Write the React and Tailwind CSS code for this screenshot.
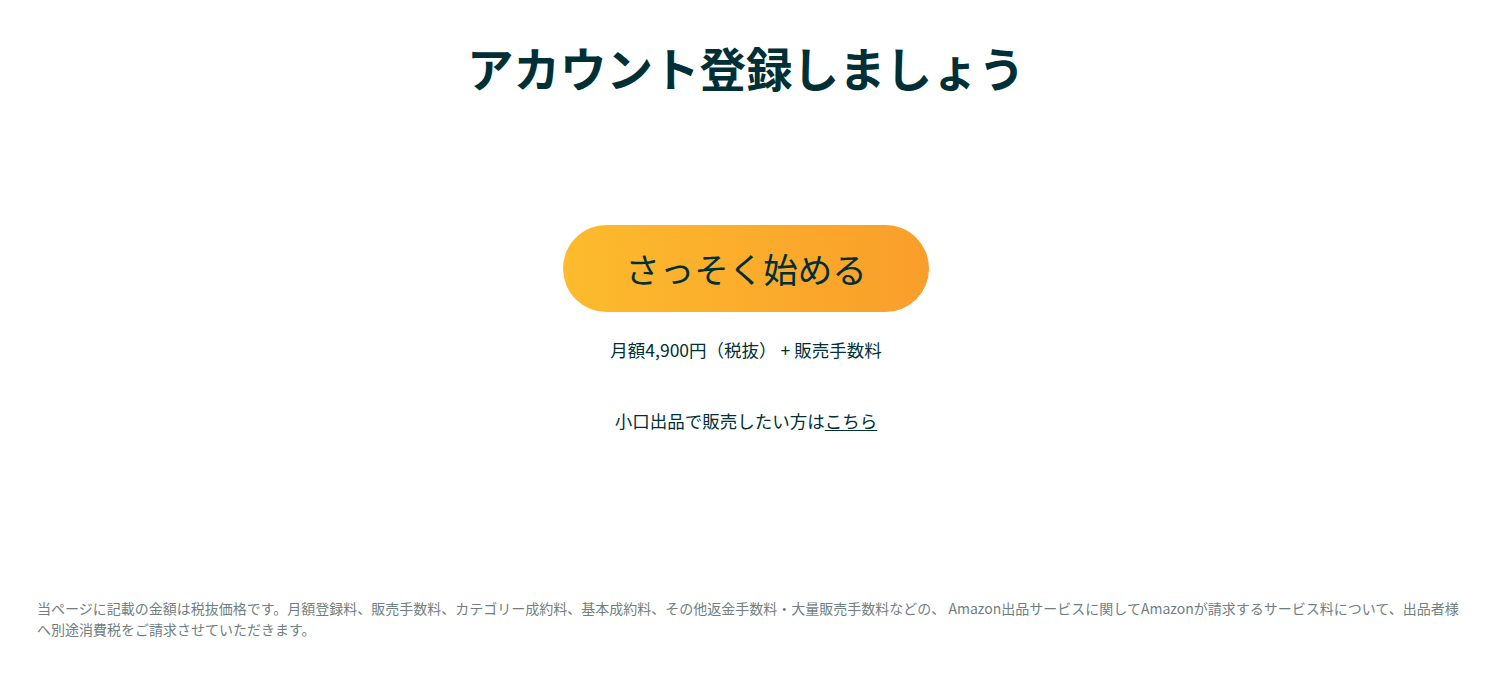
import React from "react";

const font = { fontFamily: '"Noto Sans CJK JP", "Noto Sans", sans-serif' };

export default function App() {
  return (
    <div className="w-full h-[676px] bg-white flex flex-col text-[#002f36]" style={font}>
      <div className="flex flex-col items-center pr-[8px]">
        {/* Heading */}
        <h1 className="mt-[34px] text-[46.5px] leading-[66px] font-bold">
          アカウント登録しましょう
        </h1>

        {/* CTA */}
        <button className="mt-[125px] w-[366px] h-[87px] rounded-full bg-gradient-to-r from-[#fdbb2d] to-[#f99e2a] text-[34.5px] text-[#002f36] flex items-center justify-center">
          さっそく始める
        </button>

        <p className="mt-[26px] text-[17.5px] leading-6">
          月額4,900円（税抜） + 販売手数料
        </p>

        <p className="mt-[47px] text-[17.5px] leading-6">
          小口出品で販売したい方は<a href="#" className="underline underline-offset-2">こちら</a>
        </p>
      </div>

      {/* Footnote */}
      <div className="mt-auto mb-[36px] w-full pl-[37px] pr-[38px] text-[14px] leading-[21px] text-[#6f7f81]">
        当ページに記載の金額は税抜価格です。月額登録料、販売手数料、カテゴリー成約料、基本成約料、その他返金手数料・大量販売手数料などの、 Amazon出品サービスに関してAmazonが請求するサービス料について、出品者様へ別途消費税をご請求させていただきます。
      </div>
    </div>
  );
}
